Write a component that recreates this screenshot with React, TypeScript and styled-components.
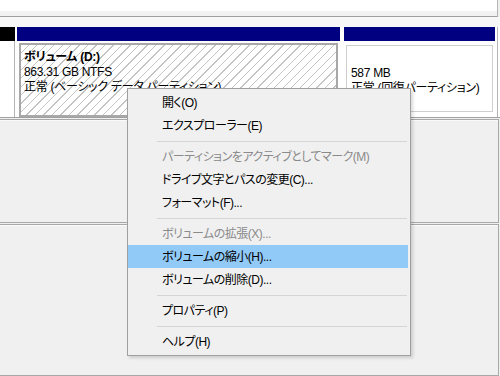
import React from "react";
import styled, { createGlobalStyle } from "styled-components";

const GlobalStyle = createGlobalStyle`
  html, body {
    margin: 0;
    padding: 0;
  }
  body {
    width: 500px;
    height: 376px;
    overflow: hidden;
    background: #f0f0f0;
    font-family: "Liberation Sans", "Noto Sans CJK JP", sans-serif;
    font-size: 12px;
    color: #000;
  }
`;

const Screen = styled.div`
  position: relative;
  width: 500px;
  height: 376px;
  overflow: hidden;
  display: flex;
  flex-direction: column;
  background: #f0f0f0;
`;

const ListStrip = styled.div`
  height: 17px;
  margin-right: 2px;
  background: linear-gradient(#fff 0 11px, #f2f2f2 11px);
  border-bottom: 1px solid #a0a0a0;
  border-right: 1px solid #b4b4b4;
`;

const Splitter = styled.div`
  height: 11px;
  background: #f7f7f7;
`;

const DiskRow = styled.div`
  display: flex;
  height: 95px;
  background: #fff;
  border-bottom: 1px solid #a0a0a0;
`;

const Column = styled.div<{ $width: number; $gap?: number }>`
  display: flex;
  flex-direction: column;
  width: ${(p) => p.$width}px;
  margin-left: ${(p) => p.$gap ?? 0}px;
  flex-shrink: 0;
`;

const Header = styled.div<{ $color: string }>`
  height: 14px;
  background: ${(p) => p.$color};
`;

const LabelBody = styled.div`
  flex: 1;
  border-right: 1px solid #b4b4b4;
`;

const PartitionBody = styled.div<{ $selected?: boolean }>`
  flex: 1;
  display: flex;
  flex-direction: column;
  padding: ${(p) => (p.$selected ? "2px 2px 0 2px" : "4px 2px 5px 2px")};
`;

const PartitionBox = styled.div<{ $selected?: boolean }>`
  flex: 1;
  padding: ${(p) => (p.$selected ? "5px 3px" : "5px 4px")};
  line-height: 15px;
  white-space: nowrap;
  overflow: hidden;
  letter-spacing: -0.3px;
  font-feature-settings: "palt";
  border: ${(p) => (p.$selected ? "2px solid #a8a8a8" : "1px solid #cfcfcf")};
  background: ${(p) =>
    p.$selected
      ? "repeating-linear-gradient(135deg, #ffffff 0 5px, #c4c4c4 5px 6px)"
      : "#fff"};
`;

const Name = styled.div`
  font-weight: bold;
  height: 15px;
`;

const Line = styled.div`
  height: 15px;
`;

const RightEdge = styled.div`
  flex: 1;
  border-right: 1px solid #b4b4b4;
  margin-right: 2px;
`;

const NextRow = styled.div<{ $height: number }>`
  height: ${(p) => p.$height}px;
  margin-top: 1px;
  margin-right: 1px;
  border-top: 1px solid #a8a8a8;
  border-bottom: 1px solid #a8a8a8;
  border-right: 1px solid #a8a8a8;
  box-shadow: inset 0 1px 0 #fafafa;
  flex-shrink: 0;
`;

const Menu = styled.div`
  position: absolute;
  left: 127px;
  top: 88px;
  width: 282px;
  padding: 2px 0;
  background: #f0f0f0;
  border: 1px solid #a0a0a0;
  box-shadow: 2px 2px 3px rgba(0, 0, 0, 0.15);
  font-feature-settings: "palt";
  letter-spacing: -0.5px;
`;

const MenuItem = styled.div<{ $disabled?: boolean; $active?: boolean }>`
  height: 23px;
  box-sizing: border-box;
  padding: 1px 0 0 34px;
  line-height: 22px;
  margin-right: 2px;
  white-space: nowrap;
  color: ${(p) => (p.$disabled ? "#8a8a8a" : "#000")};
  background: ${(p) => (p.$active ? "#91c9f7" : "transparent")};
`;

const Separator = styled.div`
  height: 8px;
  display: flex;
  align-items: center;
  margin: 0 3px 0 29px;

  &::after {
    content: "";
    flex: 1;
    border-top: 1px solid #d5d5d5;
  }
`;

type Entry =
  | { label: string; disabled?: boolean; active?: boolean }
  | "sep";

const entries: Entry[] = [
  { label: "開く(O)" },
  { label: "エクスプローラー(E)" },
  "sep",
  { label: "パーティションをアクティブとしてマーク(M)", disabled: true },
  { label: "ドライブ文字とパスの変更(C)..." },
  { label: "フォーマット(F)..." },
  "sep",
  { label: "ボリュームの拡張(X)...", disabled: true },
  { label: "ボリュームの縮小(H)...", active: true },
  { label: "ボリュームの削除(D)..." },
  "sep",
  { label: "プロパティ(P)" },
  "sep",
  { label: "ヘルプ(H)" },
];

export default function App() {
  return (
    <Screen>
      <GlobalStyle />
      <ListStrip />
      <Splitter />
      <DiskRow>
        <Column $width={15}>
          <Header $color="#000" />
          <LabelBody />
        </Column>
        <Column $width={323} $gap={2}>
          <Header $color="#000080" />
          <PartitionBody $selected>
            <PartitionBox $selected>
              <Name>ボリューム (D:)</Name>
              <Line>863.31 GB NTFS</Line>
              <Line>正常 (ベーシック データ パーティション)</Line>
            </PartitionBox>
          </PartitionBody>
        </Column>
        <Column $width={151} $gap={4}>
          <Header $color="#000080" />
          <PartitionBody>
            <PartitionBox>
              <Name />
              <Line>587 MB</Line>
              <Line>正常 (回復パーティション)</Line>
            </PartitionBox>
          </PartitionBody>
        </Column>
        <RightEdge />
      </DiskRow>
      <NextRow $height={102} />
      <NextRow $height={150} />

      <Menu>
        {entries.map((e, i) =>
          e === "sep" ? (
            <Separator key={i} />
          ) : (
            <MenuItem key={i} $disabled={e.disabled} $active={e.active}>
              {e.label}
            </MenuItem>
          )
        )}
      </Menu>
    </Screen>
  );
}
